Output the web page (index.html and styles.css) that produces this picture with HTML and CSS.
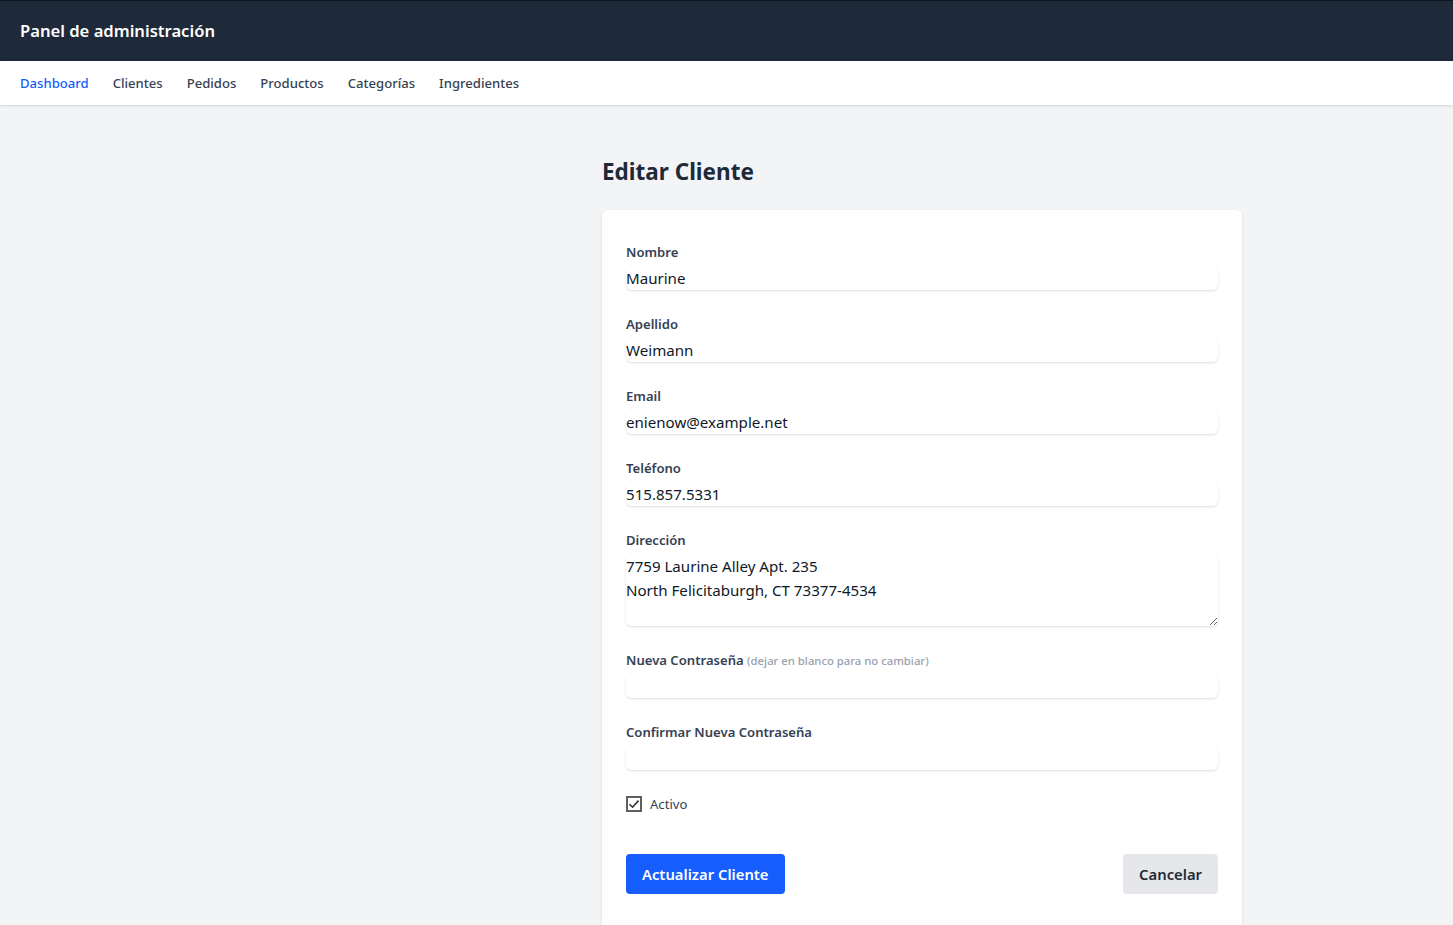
FILE: index.html
```html
<!DOCTYPE html>
<html lang="es">
<head>
<meta charset="utf-8">
<title>Editar Cliente</title>
<link rel="stylesheet" href="styles.css">
</head>
<body>
<header class="topbar">
  <h1 class="brand">Panel de administración</h1>
</header>
<nav class="nav">
  <a class="nav-link active" href="#">Dashboard</a>
  <a class="nav-link" href="#">Clientes</a>
  <a class="nav-link" href="#">Pedidos</a>
  <a class="nav-link" href="#">Productos</a>
  <a class="nav-link" href="#">Categorías</a>
  <a class="nav-link" href="#">Ingredientes</a>
</nav>
<main class="main">
  <div class="wrap">
    <h2 class="title">Editar Cliente</h2>
    <form class="card">
      <div class="field">
        <label class="label">Nombre</label>
        <input class="input" type="text" value="Maurine">
      </div>
      <div class="field">
        <label class="label">Apellido</label>
        <input class="input" type="text" value="Weimann">
      </div>
      <div class="field">
        <label class="label">Email</label>
        <input class="input" type="email" value="enienow@example.net">
      </div>
      <div class="field">
        <label class="label">Teléfono</label>
        <input class="input" type="text" value="515.857.5331">
      </div>
      <div class="field">
        <label class="label">Dirección</label>
        <textarea class="input textarea" rows="3">7759 Laurine Alley Apt. 235
North Felicitaburgh, CT 73377-4534</textarea>
      </div>
      <div class="field">
        <label class="label">Nueva Contraseña <span class="hint">(dejar en blanco para no cambiar)</span></label>
        <input class="input" type="password" value="">
      </div>
      <div class="field">
        <label class="label">Confirmar Nueva Contraseña</label>
        <input class="input" type="password" value="">
      </div>
      <label class="check">
        <span class="box"><svg width="12" height="12" viewBox="0 0 12 12"><path d="M1.5 6.2 L4.6 9.2 L10.5 2.6" fill="none" stroke="#333" stroke-width="1.6"/></svg></span>
        <span class="check-text">Activo</span>
      </label>
      <div class="actions">
        <button class="btn btn-primary" type="button">Actualizar Cliente</button>
        <button class="btn btn-secondary" type="button">Cancelar</button>
      </div>
    </form>
  </div>
</main>
</body>
</html>
```
FILE: styles.css
```css
* { box-sizing: border-box; }
html, body { margin: 0; padding: 0; }
body {
  font-family: "Noto Sans", "Open Sans", sans-serif;
  background: #f3f4f6;
  color: #1e2939;
  min-height: 100vh;
}
.topbar {
  background: #1e2939;
  border-top: 1px solid #0f141c;
  padding: 16px 20px;
}
.brand {
  margin: 0;
  color: #fff;
  font-size: 16.6px;
  line-height: 28px;
  font-weight: 600;
}
.nav {
  background: #fff;
  display: flex;
  gap: 24px;
  padding: 12px 20px;
  box-shadow: 0 1px 3px rgba(0,0,0,.1), 0 1px 2px -1px rgba(0,0,0,.1);
  position: relative;
}
.nav-link {
  font-size: 13.1px;
  line-height: 20px;
  font-weight: 500;
  color: #364153;
  text-decoration: none;
}
.nav-link.active { color: #155dfc; }
.main {
  padding: 51px 0 0 602px;
}
.wrap { width: 640px; }
.title {
  margin: 0 0 22px;
  font-size: 22.5px;
  line-height: 32px;
  font-weight: 700;
  color: #1e2939;
}
.card {
  background: #fff;
  border-radius: 6px;
  box-shadow: 0 1px 3px rgba(0,0,0,.1), 0 1px 2px -1px rgba(0,0,0,.1);
  padding: 32px 24px 40px;
}
.field { display: flex; flex-direction: column; margin-bottom: 24px; }
.label {
  font-size: 13.1px;
  line-height: 20px;
  height: 20px;
  font-weight: 600;
  color: #364153;
  margin-bottom: 4px;
}
.hint { font-size: 11.3px; line-height: 1; color: #99a1af; font-weight: 500; }
.input {
  font-family: inherit;
  font-size: 15.1px;
  line-height: 24px;
  height: 24px;
  padding: 0;
  border: 0;
  border-radius: 6px;
  background: #fff;
  color: #101828;
  box-shadow: 0 1px 3px rgba(0,0,0,.1), 0 1px 2px -1px rgba(0,0,0,.1);
  outline: none;
  width: 100%;
}
.textarea { height: 72px; resize: vertical; display: block; }
.check {
  display: flex;
  align-items: center;
  gap: 8px;
  height: 20px;
}
.box {
  width: 16px; height: 16px;
  border: 2px solid #5f5f5f;
  background: #fff;
  display: flex; align-items: center; justify-content: center;
}
.check-text { font-size: 13.1px; line-height: 20px; color: #364153; }
.actions {
  display: flex;
  justify-content: space-between;
  margin-top: 40px;
}
.btn {
  font-family: inherit;
  font-size: 14.8px;
  line-height: 24px;
  font-weight: 600;
  padding: 8px 16px;
  border: 0;
  border-radius: 4px;
  cursor: pointer;
}
.btn-primary { background: #155dfc; color: #fff; }
.btn-secondary { background: #e5e7eb; color: #1e2939; }
```
